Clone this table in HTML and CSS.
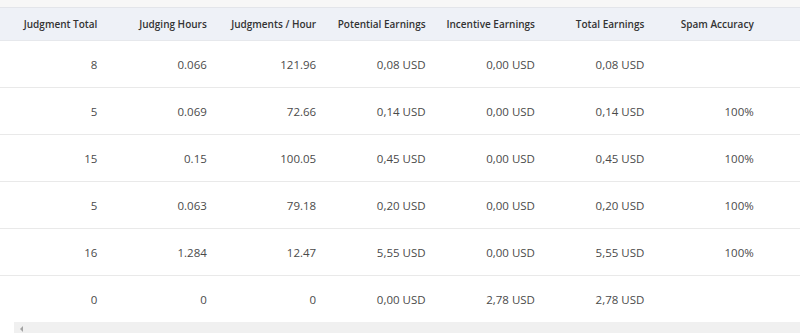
FILE: index.html
```html
<!DOCTYPE html>
<html>
<head>
<meta charset="utf-8">
<link rel="stylesheet" href="styles.css">
</head>
<body>
<div class="topstrip"></div>
<div class="wrap">
<table class="grid">
<colgroup>
<col class="c"><col class="c"><col class="c"><col class="c"><col class="c"><col class="c"><col class="c"><col class="rest">
</colgroup>
<thead>
<tr><th>Judgment Total</th><th>Judging Hours</th><th>Judgments / Hour</th><th>Potential Earnings</th><th>Incentive Earnings</th><th>Total Earnings</th><th>Spam Accuracy</th><th></th></tr>
</thead>
<tbody>
<tr><td>8</td><td>0.066</td><td>121.96</td><td>0,08 USD</td><td>0,00 USD</td><td>0,08 USD</td><td></td><td></td></tr>
<tr><td>5</td><td>0.069</td><td>72.66</td><td>0,14 USD</td><td>0,00 USD</td><td>0,14 USD</td><td>100%</td><td></td></tr>
<tr><td>15</td><td>0.15</td><td>100.05</td><td>0,45 USD</td><td>0,00 USD</td><td>0,45 USD</td><td>100%</td><td></td></tr>
<tr><td>5</td><td>0.063</td><td>79.18</td><td>0,20 USD</td><td>0,00 USD</td><td>0,20 USD</td><td>100%</td><td></td></tr>
<tr><td>16</td><td>1.284</td><td>12.47</td><td>5,55 USD</td><td>0,00 USD</td><td>5,55 USD</td><td>100%</td><td></td></tr>
<tr class="last"><td>0</td><td>0</td><td>0</td><td>0,00 USD</td><td>2,78 USD</td><td>2,78 USD</td><td></td><td></td></tr>
</tbody>
</table>
<div class="hscroll"><span class="arrow"></span></div>
</div>
</body>
</html>
```
FILE: styles.css
```css
html, body {
  margin: 0;
  padding: 0;
  background: #ffffff;
  overflow: hidden;
}
body {
  font-family: "Open Sans", "Liberation Sans", sans-serif;
  color: #444;
}
.topstrip {
  height: 7px;
  background: #f7f7f7;
  border-bottom: 1px solid #e3e5ea;
}
.grid {
  border-collapse: collapse;
  table-layout: fixed;
  width: 800px;
}
.grid col.c { width: 109.4px; }
.grid th {
  height: 32px;
  padding: 0 12px 0 0;
  background: #eef1f7;
  font-size: 10px;
  font-weight: 600;
  color: #333;
  text-align: right;
  white-space: nowrap;
  border-bottom: 1px solid #e6e8ec;
}
.grid td {
  height: 46px;
  padding: 0 12px 0 0;
  font-size: 11.5px;
  color: #4a4a4a;
  text-align: right;
  white-space: nowrap;
  border-bottom: 1px solid #e9e9e9;
}
.grid tr.last td {
  border-bottom: none;
}
.hscroll {
  margin-left: 14px;
  height: 11px;
  background: #f0f0f0;
  position: relative;
}
.arrow {
  position: absolute;
  left: 6px;
  top: 4px;
  width: 0;
  height: 0;
  border-top: 3px solid transparent;
  border-bottom: 3px solid transparent;
  border-right: 3px solid #a3a3a3;
}
```
